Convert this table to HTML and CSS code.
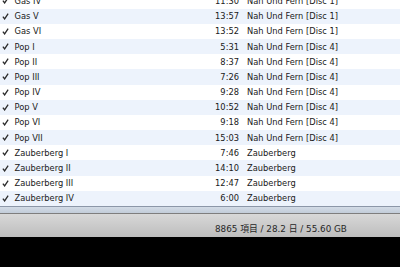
FILE: index.html
```html
<!DOCTYPE html>
<html>
<head>
<meta charset="utf-8">
<link rel="stylesheet" href="styles.css">
</head>
<body>
<div class="window">
  <div class="list">
    <div class="row"><span class="chk"><svg viewBox="0 0 8 8" width="7" height="7"><path d="M1 4.2 L3 6.8 L7 0.8" /></svg></span><span class="name">Gas IV</span><span class="time">11:30</span><span class="album">Nah Und Fern [Disc 1]</span></div>
    <div class="row alt"><span class="chk"><svg viewBox="0 0 8 8" width="7" height="7"><path d="M1 4.2 L3 6.8 L7 0.8" /></svg></span><span class="name">Gas V</span><span class="time">13:57</span><span class="album">Nah Und Fern [Disc 1]</span></div>
    <div class="row"><span class="chk"><svg viewBox="0 0 8 8" width="7" height="7"><path d="M1 4.2 L3 6.8 L7 0.8" /></svg></span><span class="name">Gas VI</span><span class="time">13:52</span><span class="album">Nah Und Fern [Disc 1]</span></div>
    <div class="row alt"><span class="chk"><svg viewBox="0 0 8 8" width="7" height="7"><path d="M1 4.2 L3 6.8 L7 0.8" /></svg></span><span class="name">Pop I</span><span class="time">5:31</span><span class="album">Nah Und Fern [Disc 4]</span></div>
    <div class="row"><span class="chk"><svg viewBox="0 0 8 8" width="7" height="7"><path d="M1 4.2 L3 6.8 L7 0.8" /></svg></span><span class="name">Pop II</span><span class="time">8:37</span><span class="album">Nah Und Fern [Disc 4]</span></div>
    <div class="row alt"><span class="chk"><svg viewBox="0 0 8 8" width="7" height="7"><path d="M1 4.2 L3 6.8 L7 0.8" /></svg></span><span class="name">Pop III</span><span class="time">7:26</span><span class="album">Nah Und Fern [Disc 4]</span></div>
    <div class="row"><span class="chk"><svg viewBox="0 0 8 8" width="7" height="7"><path d="M1 4.2 L3 6.8 L7 0.8" /></svg></span><span class="name">Pop IV</span><span class="time">9:28</span><span class="album">Nah Und Fern [Disc 4]</span></div>
    <div class="row alt"><span class="chk"><svg viewBox="0 0 8 8" width="7" height="7"><path d="M1 4.2 L3 6.8 L7 0.8" /></svg></span><span class="name">Pop V</span><span class="time">10:52</span><span class="album">Nah Und Fern [Disc 4]</span></div>
    <div class="row"><span class="chk"><svg viewBox="0 0 8 8" width="7" height="7"><path d="M1 4.2 L3 6.8 L7 0.8" /></svg></span><span class="name">Pop VI</span><span class="time">9:18</span><span class="album">Nah Und Fern [Disc 4]</span></div>
    <div class="row alt"><span class="chk"><svg viewBox="0 0 8 8" width="7" height="7"><path d="M1 4.2 L3 6.8 L7 0.8" /></svg></span><span class="name">Pop VII</span><span class="time">15:03</span><span class="album">Nah Und Fern [Disc 4]</span></div>
    <div class="row"><span class="chk"><svg viewBox="0 0 8 8" width="7" height="7"><path d="M1 4.2 L3 6.8 L7 0.8" /></svg></span><span class="name">Zauberberg I</span><span class="time">7:46</span><span class="album">Zauberberg</span></div>
    <div class="row alt"><span class="chk"><svg viewBox="0 0 8 8" width="7" height="7"><path d="M1 4.2 L3 6.8 L7 0.8" /></svg></span><span class="name">Zauberberg II</span><span class="time">14:10</span><span class="album">Zauberberg</span></div>
    <div class="row"><span class="chk"><svg viewBox="0 0 8 8" width="7" height="7"><path d="M1 4.2 L3 6.8 L7 0.8" /></svg></span><span class="name">Zauberberg III</span><span class="time">12:47</span><span class="album">Zauberberg</span></div>
    <div class="row alt"><span class="chk"><svg viewBox="0 0 8 8" width="7" height="7"><path d="M1 4.2 L3 6.8 L7 0.8" /></svg></span><span class="name">Zauberberg IV</span><span class="time">6:00</span><span class="album">Zauberberg</span></div>
  </div>
  <div class="hscroll"></div>
  <div class="status"><span class="status-text">8865 項目 / 28.2 日 / 55.60 GB</span></div>
  <div class="dock"></div>
</div>
</body>
</html>
```

FILE: styles.css
```css
html, body {
  margin: 0;
  padding: 0;
  background: #000;
}
.window {
  width: 400px;
  height: 267px;
  display: flex;
  flex-direction: column;
  overflow: hidden;
  font-family: "DejaVu Sans", "Noto Sans CJK JP", sans-serif;
  font-size: 8.3px;
  color: #202020;
}
.list {
  height: 206px;
  flex: none;
  display: flex;
  flex-direction: column;
  justify-content: flex-end;
  overflow: hidden;
  background: #fff;
}
.row {
  flex: none;
  height: 15.2px;
  display: grid;
  grid-template-columns: 14.5px 184.5px 40px auto;
  align-items: center;
  background: #fff;
}
.row.alt {
  background: #edf3fc;
}
.chk {
  display: flex;
  justify-content: center;
}
.chk svg {
  display: block;
  margin-left: -4px;
}
.chk path {
  fill: none;
  stroke: #2b2b2b;
  stroke-width: 1.5;
}
.time {
  text-align: right;
}
.album {
  padding-left: 8px;
}
.hscroll {
  flex: none;
  height: 6px;
  border-top: 1px solid #8c97a8;
  background: linear-gradient(#d3dbe6, #c2ccd9);
}
.status {
  flex: none;
  height: 24px;
  border-top: 1px solid #7e7e7e;
  background: linear-gradient(#d8d8d8, #bdbdbd);
  display: flex;
  align-items: center;
  padding-left: 215px;
  padding-top: 6px;
  box-sizing: border-box;
}
.status-text {
  font-size: 8.8px;
  color: #262626;
}
.dock {
  flex: 1;
  background: #000;
}
```
